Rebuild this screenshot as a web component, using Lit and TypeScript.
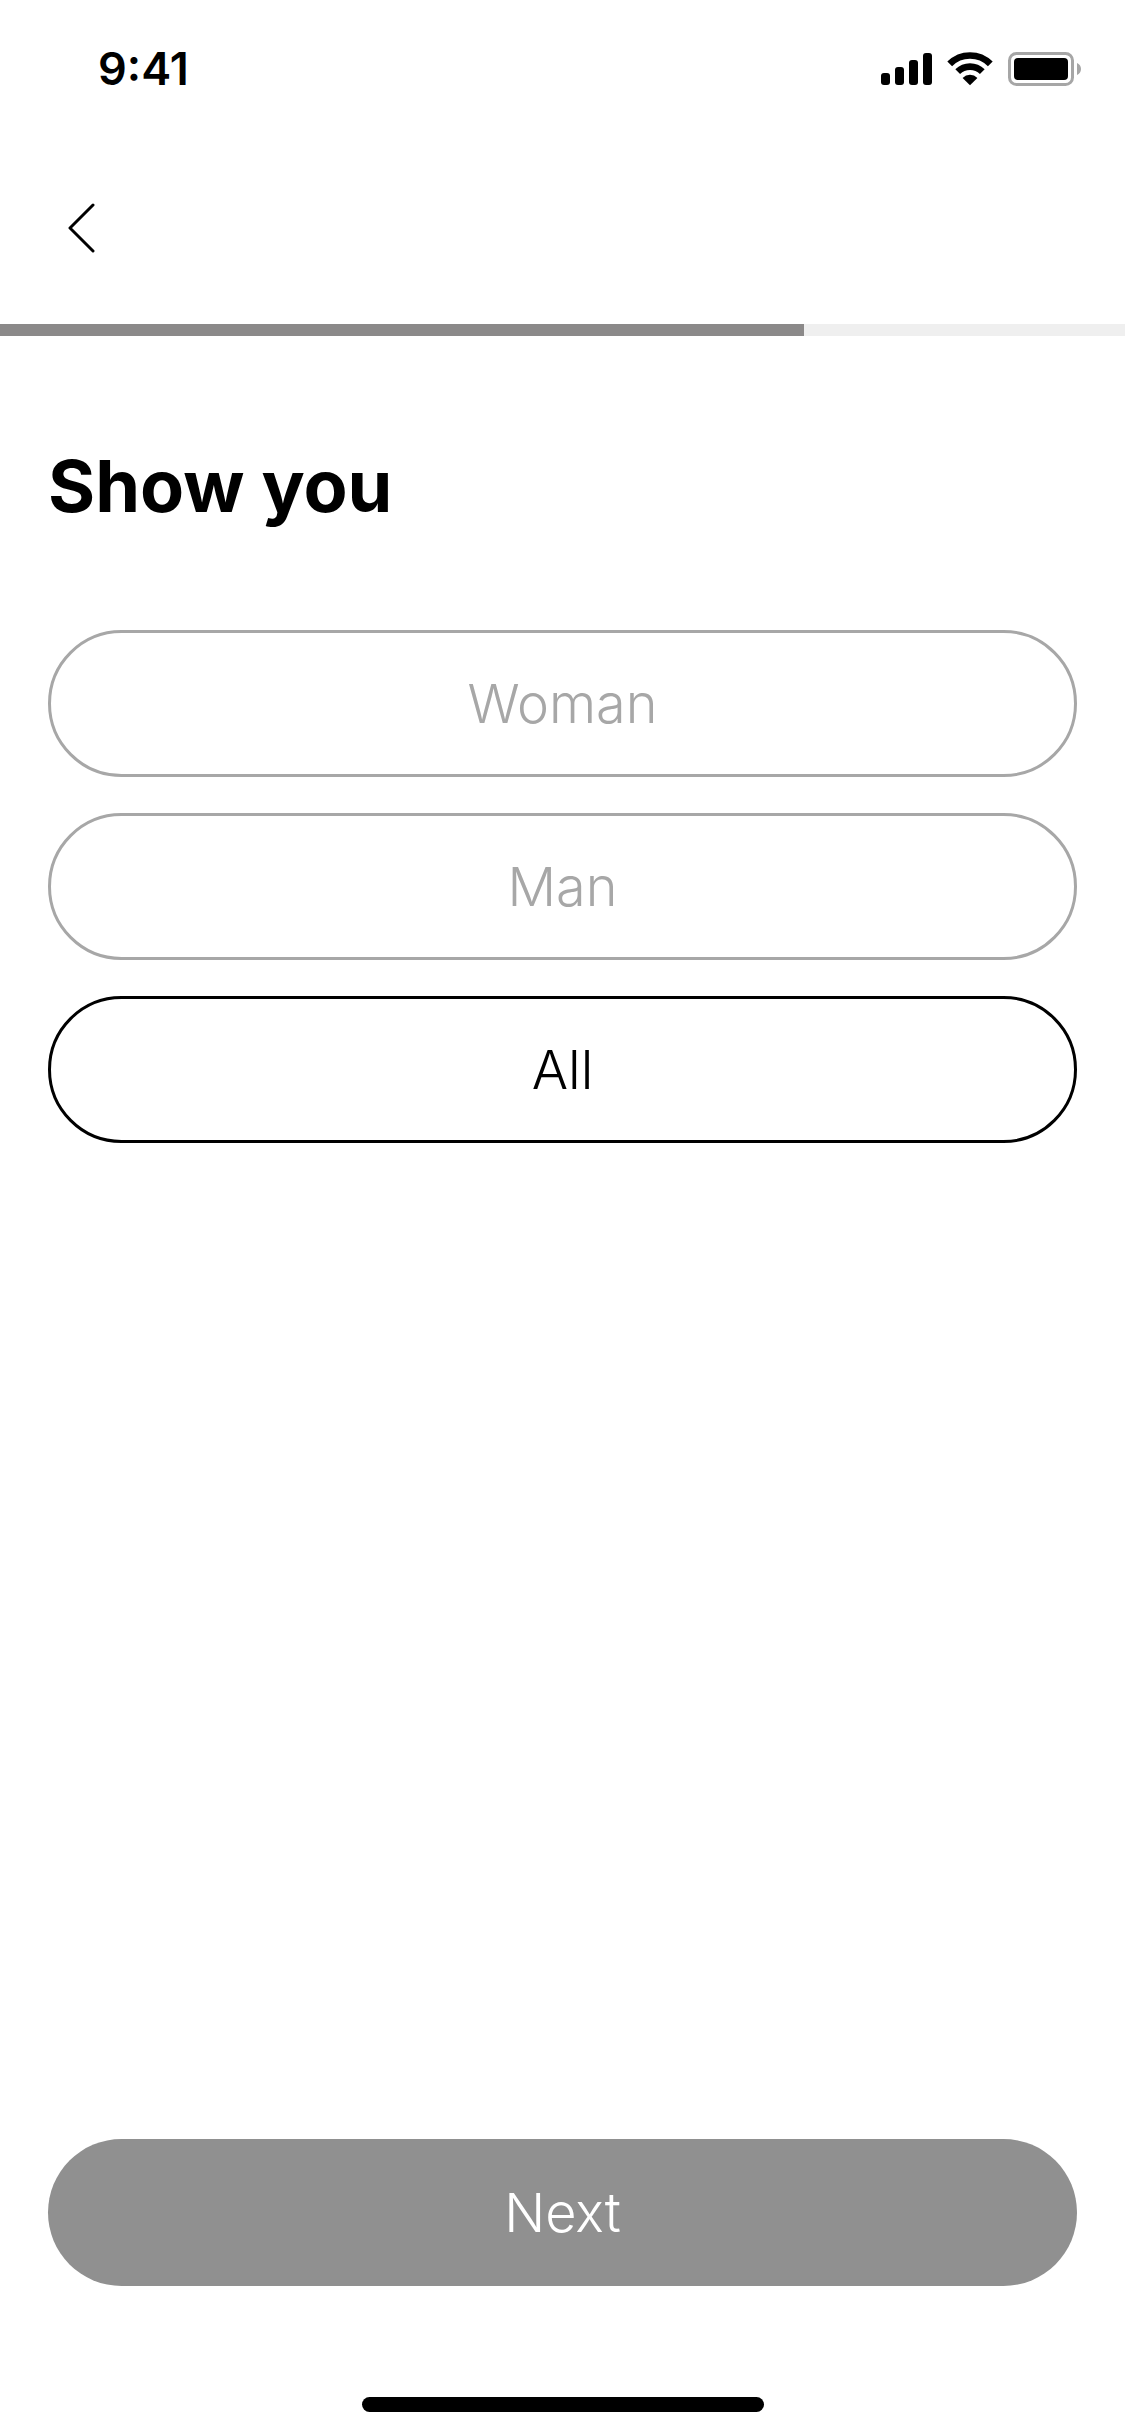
import { LitElement, html, css, svg } from "lit";
import { customElement, property, state } from "lit/decorators.js";
import { styleMap } from "lit/directives/style-map.js";

@customElement("status-bar")
class StatusBar extends LitElement {
  static styles = css`
    :host {
      display: flex;
      align-items: center;
      justify-content: space-between;
      box-sizing: border-box;
      height: 132px;
      padding: 6px 44px 0 98px;
    }
    .time {
      font-size: 45px;
      line-height: 54px;
      font-weight: 600;
    }
    .icons {
      display: flex;
      align-items: center;
      gap: 15px;
    }
    .icon {
      display: block;
    }
  `;

  render() {
    return html`
      <span class="time">9:41</span>
      <div class="icons">
        ${svg`<svg class="icon" width="51" height="34" viewBox="0 0 51 34" aria-hidden="true">
          <rect x="0" y="21" width="9" height="12" rx="3" />
          <rect x="14" y="15" width="9" height="18" rx="3" />
          <rect x="28" y="8" width="9" height="25" rx="3" />
          <rect x="42" y="1" width="9" height="32" rx="3" />
        </svg>`}
        ${svg`<svg class="icon" width="46" height="34" viewBox="0 0 46 34" aria-hidden="true">
          <g fill="none" stroke="#000" stroke-width="6.7">
            <path d="M2.7 11.9A28.7 28.7 0 0 1 43.3 11.9" />
            <path d="M10.7 19.7A17.4 17.4 0 0 1 35.3 19.7" />
          </g>
          <path d="M23 33.2L15.6 25.9A10.4 10.4 0 0 1 30.4 25.9Z" />
        </svg>`}
        ${svg`<svg class="icon" width="73" height="34" viewBox="0 0 73 34" aria-hidden="true">
          <rect x="1.5" y="1.5" width="63" height="31" rx="7" fill="none" stroke="#a6a6a6" stroke-width="3" />
          <rect x="6" y="6" width="54" height="22" rx="4" />
          <path d="M69 11C71.4 12 73 14.3 73 17C73 19.7 71.4 22 69 23Z" fill="#a6a6a6" />
        </svg>`}
      </div>
    `;
  }
}

@customElement("step-progress")
class StepProgress extends LitElement {
  static styles = css`
    :host {
      display: block;
    }
    .track {
      height: 12px;
      background: #efefef;
    }
    .fill {
      height: 100%;
      background: #8b8989;
    }
  `;

  @property({ type: Number }) step = 0;
  @property({ type: Number }) total = 1;

  render() {
    const width = `${(this.step / this.total) * 100}%`;
    return html`
      <div class="track" role="progressbar" aria-label="Progress" aria-valuemin="0"
        aria-valuemax=${this.total} aria-valuenow=${this.step}>
        <div class="fill" style=${styleMap({ width })}></div>
      </div>
    `;
  }
}

@customElement("app-root")
class AppRoot extends LitElement {
  static styles = css`
    :host {
      display: flex;
      flex-direction: column;
      min-height: 100vh;
      background: #fff;
      color: #000;
      font-family: Inter, "Liberation Sans", sans-serif;
    }
    .header {
      display: flex;
      align-items: center;
      height: 192px;
      padding: 0 48px;
    }
    .back {
      display: block;
      padding: 24px 20px;
      border: 0;
      background: none;
      cursor: pointer;
    }
    .back-icon {
      display: block;
    }
    .content {
      display: flex;
      flex-direction: column;
      flex: 1;
      padding: 106px 48px 0;
    }
    .title {
      margin: 0 0 100px;
      font-size: 72px;
      line-height: 88px;
      font-weight: 700;
    }
    .options {
      display: flex;
      flex-direction: column;
      gap: 36px;
      margin: 0;
      padding: 0;
      border: 0;
    }
    .option {
      position: relative;
      display: flex;
      align-items: center;
      justify-content: center;
      box-sizing: border-box;
      height: 147px;
      border: 3px solid #a7a7a7;
      border-radius: 74px;
      color: #a7a7a7;
      font-size: 54px;
      line-height: 66px;
      font-weight: 350;
      cursor: pointer;
    }
    .option:has(.radio:checked) {
      border-color: #000;
      color: #000;
    }
    .radio {
      position: absolute;
      inset: 0;
      margin: 0;
      opacity: 0;
      cursor: pointer;
    }
    .footer {
      display: flex;
      flex-direction: column;
      align-items: center;
      padding: 48px 48px 24px;
    }
    .next {
      width: 100%;
      height: 147px;
      border: 0;
      border-radius: 74px;
      background: #909090;
      color: #fff;
      font: 350 54px/66px Inter, "Liberation Sans", sans-serif;
      cursor: pointer;
    }
    .home-indicator {
      width: 402px;
      height: 15px;
      margin-top: 111px;
      border-radius: 8px;
      background: #000;
    }
  `;

  @state() private selected = "All";

  private options = ["Woman", "Man", "All"];

  render() {
    return html`
      <status-bar></status-bar>
      <header class="header">
        <button class="back" type="button" aria-label="Back">
          <svg class="back-icon" width="27" height="50" viewBox="0 0 27 50" aria-hidden="true">
            <path d="M25 2L2 25L25 48" fill="none" stroke="#000" stroke-width="3"
              stroke-linecap="round" stroke-linejoin="round" />
          </svg>
        </button>
      </header>
      <step-progress step="5" total="7"></step-progress>
      <main class="content">
        <h1 class="title" id="title">Show you</h1>
        <fieldset class="options" aria-labelledby="title">
          ${this.options.map(
            (name) => html`
              <label class="option">
                <input class="radio" type="radio" name="show" .value=${name}
                  .checked=${this.selected === name}
                  @change=${() => (this.selected = name)} />
                <span>${name}</span>
              </label>
            `
          )}
        </fieldset>
      </main>
      <footer class="footer">
        <button class="next" type="button">Next</button>
        <div class="home-indicator"></div>
      </footer>
    `;
  }
}
